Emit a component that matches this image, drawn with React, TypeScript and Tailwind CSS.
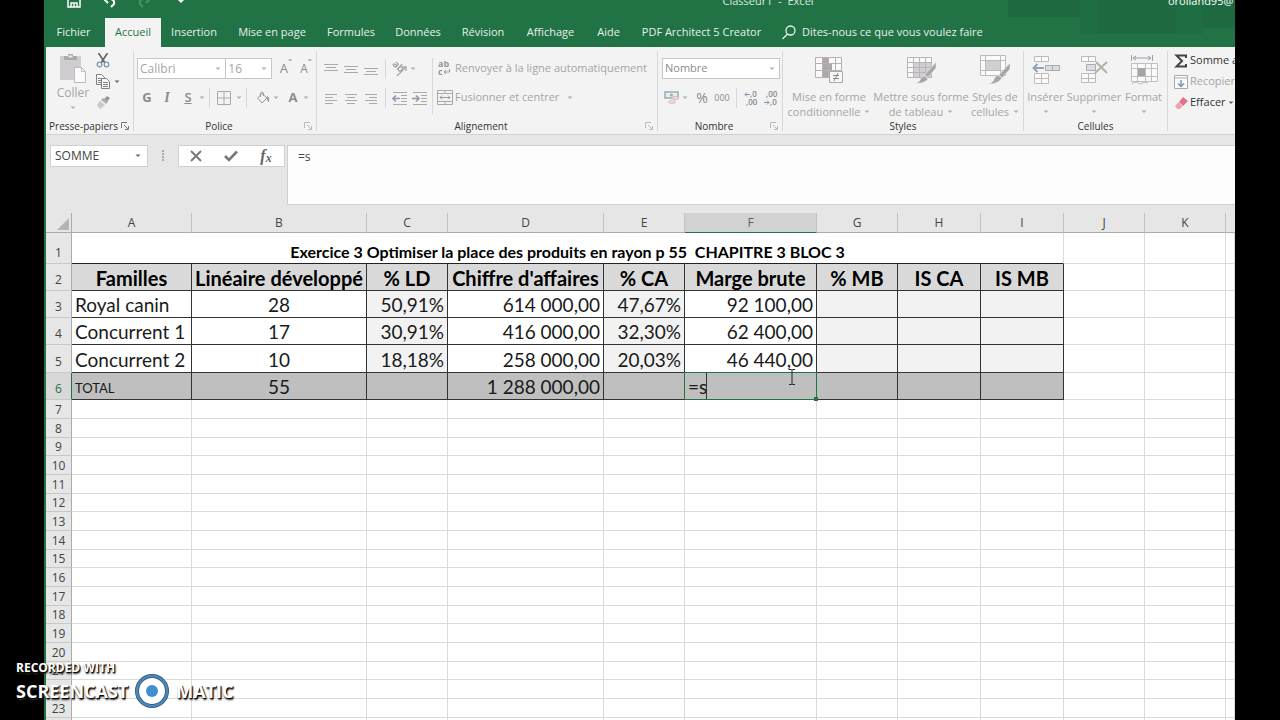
import { clsx } from "clsx";
import type { ReactNode } from "react";

const tabs = [
  { label: "Fichier", width: "w-[59px] pr-1" },
  { label: "Accueil", width: "w-[56px]", active: true },
  { label: "Insertion", width: "w-[66px]" },
  { label: "Mise en page", width: "w-[90px]" },
  { label: "Formules", width: "w-[68px]" },
  { label: "Données", width: "w-[66px]" },
  { label: "Révision", width: "w-[64px]" },
  { label: "Affichage", width: "w-[71px]" },
  { label: "Aide", width: "w-[45px]" },
  { label: "PDF Architect 5 Creator", width: "w-[141px]" },
];

const columns = [
  { name: "A", width: "w-[120px]" },
  { name: "B", width: "w-[175px]" },
  { name: "C", width: "w-[81px]" },
  { name: "D", width: "w-[156px]" },
  { name: "E", width: "w-[81px]" },
  { name: "F", width: "w-[132px]" },
  { name: "G", width: "w-[81px]" },
  { name: "H", width: "w-[83px]" },
  { name: "I", width: "w-[83px]" },
  { name: "J", width: "w-[81px]" },
  { name: "K", width: "w-[81px]" },
];

const headings = [
  "Familles",
  "Linéaire développé",
  "% LD",
  "Chiffre d'affaires",
  "% CA",
  "Marge brute",
  "% MB",
  "IS CA",
  "IS MB",
];

const families = [
  ["Royal canin", "28", "50,91%", "614 000,00", "47,67%", "92 100,00", "", "", ""],
  ["Concurrent 1", "17", "30,91%", "416 000,00", "32,30%", "62 400,00", "", "", ""],
  ["Concurrent 2", "10", "18,18%", "258 000,00", "20,03%", "46 440,00", "", "", ""],
];

const totals = ["TOTAL", "55", "", "1 288 000,00", "", "=s", "", "", ""];

const emptyRows = Array.from({ length: 18 }, (_, i) => i + 7);

function Caret({ dark = false }: { dark?: boolean }) {
  return (
    <svg viewBox="0 0 6 4" className={clsx("h-1 w-1.5 shrink-0", dark ? "fill-[#666]" : "fill-[#b0b0b0]")} aria-hidden="true">
      <path d="M.5 .5h5L3 3z" />
    </svg>
  );
}

function Divider({ className }: { className?: string }) {
  return <span className={clsx("w-px shrink-0 bg-[#d8d8d8]", className)} />;
}

function Tool({ label, className, children }: { label: string; className: string; children: ReactNode }) {
  return (
    <button type="button" aria-label={label} className={clsx("flex shrink-0 items-center justify-center", className)}>
      {children}
    </button>
  );
}

function Group({
  title,
  className,
  launcher = true,
  darkLauncher = false,
  children,
}: {
  title: string;
  className: string;
  launcher?: boolean;
  darkLauncher?: boolean;
  children: ReactNode;
}) {
  return (
    <section className={clsx("flex shrink-0", className)}>
      <div className="flex min-w-0 flex-1 flex-col">
        <div className="h-[71px] shrink-0 pt-1">{children}</div>
        <div className="flex h-4 items-center text-[10px] leading-4 text-[#333]">
          <span className="flex-1 text-center whitespace-nowrap">{title}</span>
          {launcher && (
            <button type="button" aria-label={`Options ${title}`} className="mr-1">
              <svg viewBox="0 0 8 8" className={clsx("size-2 fill-none", darkLauncher ? "stroke-[#777]" : "stroke-[#bbb]")}>
                <path d="M.5 6V.5H6M3 3l4 4M7.500 4v3.500H4" />
              </svg>
            </button>
          )}
        </div>
      </div>
      <Divider className="mt-1 h-20" />
    </section>
  );
}

function BigButton({ lines, className, children }: { lines: string[]; className: string; children: ReactNode }) {
  return (
    <button type="button" className={clsx("flex shrink-0 flex-col items-center text-[11px] leading-[15px] text-[#a5a5a5]", className)}>
      <span className="mb-1 flex h-[30px] items-center">{children}</span>
      <span className="whitespace-nowrap">{lines[0]}</span>
      <span className="flex h-[15px] items-center gap-1 whitespace-nowrap">
        {lines[1]}
        <Caret />
      </span>
    </button>
  );
}

function Lines({ rows }: { rows: [number, number, number][] }) {
  return (
    <svg viewBox="0 0 16 16" className="size-4 fill-none stroke-[#aaa]" shapeRendering="crispEdges">
      {rows.map(([x1, x2, y]) => (
        <path key={y} d={`M${x1} ${y}.5H${x2}`} />
      ))}
    </svg>
  );
}

function Indent({ right = false }: { right?: boolean }) {
  return (
    <svg viewBox="0 0 16 16" className="size-4 fill-none stroke-[#aaa]">
      <path d="M1 2.500h14M9 5.500h6M9 8.500h6M9 11.500h6M1 14.500h14" />
      <path d={right ? "M0 8.500h7M4 5.500l3 3-3 3" : "M8 8.500H1M4 5.500l-3 3 3 3"} className="stroke-[#8f9bab]" strokeWidth="1.6" />
    </svg>
  );
}

function PasteIcon() {
  return (
    <svg viewBox="0 0 28 30" className="h-[30px] w-7">
      <path d="M1 3h21v24H1z" fill="#cfcdcf" />
      <path d="M5 3h4V1h5v2h4v4H5z" fill="#a9a9a9" />
      <path d="M9.500 2.500h4v2h-4z" fill="#eee" />
      <path d="M15.500 14.500h7l4 4v11h-11z" fill="#fafafa" stroke="#bbb" />
      <path d="M22.500 14.500v4h4" fill="none" stroke="#bbb" />
    </svg>
  );
}

function Scissors() {
  return (
    <svg viewBox="0 0 14 15" className="h-[15px] w-3.5 fill-none">
      <path d="M2.500 0l6.500 10M11.500 0L5 10" stroke="#666" strokeWidth="1.700" />
      <circle cx="3.500" cy="11.500" r="2.300" stroke="#8296b5" strokeWidth="1.300" />
      <circle cx="10.500" cy="11.500" r="2.300" stroke="#8296b5" strokeWidth="1.300" />
    </svg>
  );
}

function CopyIcon() {
  return (
    <svg viewBox="0 0 14 15" className="h-[15px] w-3.5 fill-[#f8f8f8] stroke-[#808080]">
      <path d="M.5.5h5l3 3v7h-8z" />
      <path d="M2 4.500h4M2 6.500h4M2 8.500h3" />
      <path d="M5.500 4.500h5l3 3v7h-8z" />
      <path d="M7 8.500h5M7 10.500h5M7 12.500h5" />
    </svg>
  );
}

function BrushIcon() {
  return (
    <svg viewBox="0 0 14 14" className="size-3.5">
      <path d="M11 1l3 2-3 4-3-3z" fill="#999" />
      <path d="M7 3l5 4-2 2-5-4z" fill="#b0b0b0" />
      <path d="M4 6l5 4-5 4-3-4z" fill="#cdc8c4" />
    </svg>
  );
}

function BordersIcon() {
  return (
    <svg viewBox="0 0 14 14" className="size-3.5 fill-none stroke-[#aaa]">
      <path d="M.5.5h13v13H.5zM7 .5v13M.5 7h13" />
    </svg>
  );
}

function BucketIcon() {
  return (
    <svg viewBox="0 0 14 14" className="size-3.5 fill-none stroke-[#999]">
      <path d="M6 2.500l5 4.500-5 5-4.500-5zM4.500 6V2q1.500-2 3 0v3" />
      <path d="M11.500 5.500q2 2 1 5-1.500-1-1-5z" className="fill-[#999]" />
    </svg>
  );
}

function AngleTextIcon() {
  return (
    <svg viewBox="0 0 16 16" className="size-4">
      <text x="0" y="7" transform="rotate(42 4 5)" fontSize="10" fontWeight="600" fill="#999">
        ab
      </text>
      <path d="M5 15l9-9M10 6h4v4" fill="none" stroke="#aaa" strokeWidth="1.300" />
    </svg>
  );
}

function WrapIcon() {
  return (
    <svg viewBox="0 0 14 15" className="h-[15px] w-3.5" fill="#999">
      <text x="1" y="6" fontSize="9" fontWeight="700">
        ab
      </text>
      <text x="1" y="14" fontSize="9" fontWeight="700">
        c
      </text>
      <path d="M12.500 8v3H7M9 9l-2 2 2 2" fill="none" stroke="#8f9bab" />
    </svg>
  );
}

function MergeIcon() {
  return (
    <svg viewBox="0 0 16 15" className="h-[15px] w-4 fill-none stroke-[#aaa]">
      <path d="M.5.5h15v14H.5zM.5 3.500h15M.5 11.500h15M8 .5v3M8 11.500v3" />
      <path d="M3 7.500h10M5 5.500l-2 2 2 2M11 5.500l2 2-2 2" className="stroke-[#8f9bab]" />
    </svg>
  );
}

function CurrencyIcon() {
  return (
    <svg viewBox="0 0 17 15" className="h-[15px] w-[17px]">
      <path d="M1 2h13v6H1z" fill="#e8edf0" stroke="#9daab5" strokeWidth="1.500" />
      <circle cx="7.500" cy="5" r="1.500" fill="#9daab5" />
      <ellipse cx="11.500" cy="8" rx="3.500" ry="1.500" fill="#eadfdf" stroke="#c9bcbc" />
      <ellipse cx="8" cy="12" rx="3.500" ry="1.500" fill="#f0dada" stroke="#dfc4c4" />
    </svg>
  );
}

function DecimalIcon({ more = false }: { more?: boolean }) {
  return (
    <svg viewBox="0 0 14 16" className="h-4 w-3.5" fill="#888">
      <text x={more ? 6 : 2} y="7" fontSize="8" fontWeight="600">
        {more ? ",0" : ",00"}
      </text>
      <text x={more ? 2 : 6} y="15" fontSize="8" fontWeight="600">
        {more ? ",00" : ",0"}
      </text>
      <path d={more ? "M6 4.500H1M3 2.500l-2 2 2 2" : "M0 12.500h5M3 10.500l2 2-2 2"} fill="none" stroke="#8296b5" />
    </svg>
  );
}

function ConditionalIcon() {
  return (
    <svg viewBox="0 0 30 28" className="h-7 w-[30px]">
      <path d="M1.500 1.500h26v20h-26z" fill="#faf8f9" />
      <path d="M9 2h5v6H9zM9 8h9v7H9zM9 15h7v6H9z" fill="#aaa" />
      <path d="M1.500 1.500h26v20h-26zM1.500 7.500h26M1.500 14.500h26M8.500 1.500v20M14.500 1.500v20M21.500 1.500v20" fill="none" stroke="#b9b0b4" />
      <path d="M15.500 15.500h13v11h-13z" fill="#f7f7f7" stroke="#aaa" />
      <path d="M19 19.500h6M19 22.500h6M24 17l-4 8" stroke="#888" fill="none" />
    </svg>
  );
}

function TableStyleIcon() {
  return (
    <svg viewBox="0 0 30 28" className="h-7 w-[30px]">
      <path d="M1.500 1.500h24v20h-24z" fill="#fafafa" />
      <path d="M8 7h18v15H8z" fill="#d2cfd2" />
      <path d="M1.500 1.500h24v20h-24zM1.500 6.500h24M1.500 11.500h24M1.500 16.500h24M7.500 1.500v20M13.500 1.500v20M19.500 1.500v20" fill="none" stroke="#b9b4b9" />
      <path d="M30 6v6l-8 9-3-2z" fill="#a5a5a5" stroke="#f3f3f3" strokeWidth=".5" />
      <path d="M18 20l4 3q-4 5-12 4 4-1 5-5z" fill="#a5a5a5" stroke="#f3f3f3" strokeWidth=".5" />
    </svg>
  );
}

function CellStyleIcon() {
  return (
    <svg viewBox="0 0 30 30" className="h-[30px] w-[30px]">
      <path d="M.5.5h25v20H.5z" fill="#fafafa" />
      <path d="M6 6h15v10H6z" fill="#d0d0d0" />
      <path d="M.5.5h25v20H.5zM.5 5.500h25M.5 15.500h25M5.500.5v20M20.500.5v20" fill="none" stroke="#bbb" />
      <path d="M30 8v6l-8 9-3-3z" fill="#a5a5a5" stroke="#f3f3f3" strokeWidth=".5" />
      <path d="M18 20l4 3q-4 6-13 6 5-2 6-7z" fill="#a5a5a5" stroke="#f3f3f3" strokeWidth=".5" />
    </svg>
  );
}

function InsertIcon() {
  return (
    <svg viewBox="0 0 28 28" className="size-7 fill-[#fafafa]">
      <path d="M2.500.5h14v5h-14zM9.500.5v5" stroke="#bbb" />
      <path d="M13.500 9.500h14v5h-14zM20.500 9.500v5" stroke="#aaa" className="fill-[#d9dde2]" />
      <path d="M2.500 17.500h14v10h-14zM9.500 17.500v10M2.500 22.500h14" stroke="#c9b8bc" />
      <path d="M12 12H2M5.500 8L1.500 12l4 4" fill="none" stroke="#91a2b5" strokeWidth="2" />
    </svg>
  );
}

function DeleteIcon() {
  return (
    <svg viewBox="0 0 28 28" className="size-7 fill-[#fafafa]">
      <path d="M1.500.5h14v5h-14zM8.500.5v5" stroke="#bbb" />
      <path d="M6.500 8.500h9v6h-9z" stroke="#aaa" className="fill-[#d9dde2]" />
      <path d="M1.500 17.500h14v9h-14zM8.500 17.500v9M1.500 22.500h14" stroke="#bbb" />
      <path d="M16 6l11 11M27 6L15 17" fill="none" stroke="#b3b0a6" strokeWidth="2" />
    </svg>
  );
}

function FormatIcon() {
  return (
    <svg viewBox="0 0 28 30" className="h-[30px] w-7">
      <path d="M1.500 0v6M22.500 0v6M3 3h18M6 1L3 3l3 2M18 1l3 2-3 2" fill="none" stroke="#91a2b5" />
      <path d="M1.500 8.500h26v18h-26zM1.500 13.500h26M1.500 21.500h26M7.500 8.500v18M15.500 8.500v18M21.500 8.500v18" fill="#fafafa" stroke="#c2bdc0" />
      <path d="M8 13h7v8H8z" fill="#a5a5a5" />
      <path d="M2 29q4-4 8 0 5-3 8-1" fill="none" stroke="#bbb" />
    </svg>
  );
}

function Ribbon() {
  return (
    <div className="flex h-[88px] overflow-hidden border-b border-[#d2d2d2] bg-[#f3f3f3]">
      <Group title="Presse-papiers" className="w-[88px]" darkLauncher>
        <div className="flex pt-0.5">
          <button type="button" className="flex w-12 flex-col items-center pl-1.5 text-[12px] leading-[15px] text-[#a5a5a5]">
            <PasteIcon />
            <span className="mt-0.5">Coller</span>
            <span className="flex h-[15px] items-center">
              <Caret />
            </span>
          </button>
          <div className="flex flex-col gap-1.5">
            <Tool label="Couper" className="ml-0.5 w-3.5">
              <Scissors />
            </Tool>
            <Tool label="Copier" className="ml-0.5 gap-1">
              <CopyIcon />
              <Caret dark />
            </Tool>
            <Tool label="Reproduire la mise en forme" className="ml-0.5 w-3.5">
              <BrushIcon />
            </Tool>
          </div>
        </div>
      </Group>

      <Group title="Police" className="w-[183px]">
        <div className="flex h-full flex-col gap-2 pt-[7px] pl-[3px] text-[#8c8c8c]">
          <div className="flex h-[21px] items-center">
            <label className="flex h-[21px] w-[90px] items-center border border-[#c6c6c6] bg-white pr-1">
              <select aria-label="Police" className="min-w-0 flex-1 appearance-none pl-0.5 text-[12px] text-[#a5a5a5] outline-none">
                <option>Calibri</option>
              </select>
              <Caret />
            </label>
            <label className="-ml-px flex h-[21px] w-[47px] items-center border border-[#c6c6c6] bg-white pr-1">
              <select aria-label="Taille" className="min-w-0 flex-1 appearance-none pl-0.5 text-[12px] text-[#a5a5a5] outline-none">
                <option>16</option>
              </select>
              <Caret />
            </label>
            <Tool label="Augmenter la taille" className="ml-1 w-5 text-[13px]">
              A<span className="mb-2 text-[10px]">ˆ</span>
            </Tool>
            <Tool label="Réduire la taille" className="w-5 text-[12px]">
              A<span className="mb-2 text-[10px]">ˇ</span>
            </Tool>
          </div>
          <div className="flex h-[21px] items-center text-[13px]">
            <Tool label="Gras" className="w-5 font-bold">G</Tool>
            <Tool label="Italique" className="w-5 font-['Liberation_Serif',serif] text-[14px] font-bold italic">I</Tool>
            <Tool label="Souligné" className="w-[22px] font-semibold underline">S</Tool>
            <Caret />
            <Divider className="mx-1 h-5" />
            <Tool label="Bordures" className="w-5"><BordersIcon /></Tool>
            <span className="w-0.5" />
            <Caret />
            <Divider className="mr-1.5 ml-1 h-5" />
            <Tool label="Remplissage" className="w-5"><BucketIcon /></Tool>
            <Caret />
            <Tool label="Couleur de police" className="ml-1 w-5 font-bold">A</Tool>
            <Caret />
          </div>
        </div>
      </Group>

      <Group title="Alignement" className="w-[341px]">
        <div className="flex h-full pt-[7px] pl-1">
          <div className="flex flex-col gap-2">
            <div className="flex h-[21px] items-center">
              <Tool label="Haut" className="w-5"><Lines rows={[[1, 15, 3], [3, 13, 6], [1, 15, 9]]} /></Tool>
              <Tool label="Milieu" className="w-5"><Lines rows={[[1, 15, 5], [3, 13, 8], [1, 15, 11]]} /></Tool>
              <Tool label="Bas" className="w-5"><Lines rows={[[1, 15, 7], [3, 13, 10], [1, 15, 13]]} /></Tool>
              <Divider className="mx-1 h-5" />
              <Tool label="Orientation" className="w-5"><AngleTextIcon /></Tool>
              <Caret />
            </div>
            <div className="flex h-[21px] items-center">
              <Tool label="Gauche" className="w-5"><Lines rows={[[2, 14, 4], [2, 10, 7], [2, 14, 10], [2, 10, 13]]} /></Tool>
              <Tool label="Centre" className="w-5"><Lines rows={[[2, 14, 4], [4, 12, 7], [2, 14, 10], [4, 12, 13]]} /></Tool>
              <Tool label="Droite" className="w-5"><Lines rows={[[2, 14, 4], [6, 14, 7], [2, 14, 10], [6, 14, 13]]} /></Tool>
              <Divider className="mx-1 h-5" />
              <Tool label="Diminuer le retrait" className="w-5"><Indent /></Tool>
              <Tool label="Augmenter le retrait" className="w-5"><Indent right /></Tool>
            </div>
          </div>
          <Divider className="mr-1 ml-0.5 h-14" />
          <div className="flex flex-col gap-2 text-[11px] text-[#a5a5a5]">
            <button type="button" className="flex h-[21px] items-center gap-1 whitespace-nowrap">
              <WrapIcon />
              Renvoyer à la ligne automatiquement
            </button>
            <button type="button" className="flex h-[21px] items-center gap-0.5 whitespace-nowrap">
              <MergeIcon />
              Fusionner et centrer
              <span className="w-1" />
              <Caret />
            </button>
          </div>
        </div>
      </Group>

      <Group title="Nombre" className="w-[125px]">
        <div className="flex h-full flex-col gap-2 pt-[7px] pl-1 text-[#8c8c8c]">
          <label className="flex h-[21px] w-[118px] items-center border border-[#c6c6c6] bg-white pr-1">
            <select aria-label="Format de nombre" className="min-w-0 flex-1 appearance-none pl-0.5 text-[11px] text-[#8c8c8c] outline-none">
              <option>Nombre</option>
            </select>
            <Caret />
          </label>
          <div className="flex h-[21px] items-center">
            <Tool label="Format comptable" className="w-5"><CurrencyIcon /></Tool>
            <Caret />
            <Tool label="Pourcentage" className="ml-1 w-5 text-[14px]">%</Tool>
            <Tool label="Milliers" className="w-5 text-[9px]">000</Tool>
            <Divider className="mx-1 h-5" />
            <Tool label="Ajouter une décimale" className="w-5"><DecimalIcon more /></Tool>
            <Tool label="Réduire les décimales" className="w-5"><DecimalIcon /></Tool>
          </div>
        </div>
      </Group>

      <Group title="Styles" className="w-[241px]" launcher={false}>
        <div className="flex pt-1">
          <BigButton lines={["Mise en forme", "conditionnelle"]} className="w-[92px]"><ConditionalIcon /></BigButton>
          <BigButton lines={["Mettre sous forme", "de tableau"]} className="w-[92px]"><TableStyleIcon /></BigButton>
          <BigButton lines={["Styles de", "cellules"]} className="w-[56px]"><CellStyleIcon /></BigButton>
        </div>
      </Group>

      <Group title="Cellules" className="w-[144px]" launcher={false}>
        <div className="flex pt-1">
          <BigButton lines={["Insérer"]} className="w-[43px]"><InsertIcon /></BigButton>
          <BigButton lines={["Supprimer"]} className="w-[54px]"><DeleteIcon /></BigButton>
          <BigButton lines={["Format"]} className="w-[45px]"><FormatIcon /></BigButton>
        </div>
      </Group>

      <div className="flex min-w-0 flex-1 flex-col overflow-hidden pt-[3px] pl-1.5 text-[11px] text-[#333]">
        <button type="button" className="flex h-[21px] items-center gap-0.5 whitespace-nowrap">
          <svg viewBox="0 0 14 14" className="size-3.5 shrink-0 fill-none stroke-[#444]" strokeWidth="2">
            <path d="M12 4V1.500H2.500L8 7l-5.500 5.500H12V10" />
          </svg>
          Somme automatique
        </button>
        <button type="button" className="flex h-[21px] items-center gap-0.5 whitespace-nowrap text-[#a5a5a5]">
          <svg viewBox="0 0 14 14" className="size-3.5 shrink-0 fill-[#fafafa] stroke-[#aaa]">
            <path d="M.5.5h13v13H.5zM.5 3h13" />
            <path d="M7 5v6M4 8.500l3 3 3-3" fill="none" stroke="#7f95ae" strokeWidth="1.500" />
          </svg>
          Recopier
        </button>
        <button type="button" className="flex h-[21px] items-center gap-0.5 whitespace-nowrap">
          <svg viewBox="0 0 14 14" className="size-3.5 shrink-0">
            <path d="M9 1l5 4-5 5-4-4z" fill="#e0708c" />
            <path d="M4.500 6l4 4.500L6 13H3l-2-3z" fill="#eda3b3" />
          </svg>
          Effacer
          <Caret dark />
        </button>
      </div>
    </div>
  );
}

function TitleBar() {
  return (
    <header className="relative bg-[#217346] text-white">
      <svg viewBox="0 0 235 36" className="absolute top-0 right-0 h-9 w-[235px]" aria-hidden="true">
        <path d="M8 0h72v17H8zM98 0h78v34H98zM203 0h32v28h-32z" fill="#1e693f" />
        <path d="M80 0h18v34H80zM176 0h27v34h-27z" fill="#1f6e43" />
      </svg>
      <div className="relative -mt-4 flex h-[34px] items-center text-[11px]">
        <div className="flex flex-[14] items-center gap-4 pl-[21px]">
          <Tool label="Enregistrer" className="w-3.5">
            <svg viewBox="0 0 14 14" className="size-3.5 fill-none stroke-white" strokeWidth="1.500">
              <path d="M1 1h12v12H1zM4 1v4h6V1M4 13V9h6v4M7 10v3" />
            </svg>
          </Tool>
          <Tool label="Annuler" className="ml-1 w-4">
            <svg viewBox="0 0 16 14" className="h-3.5 w-4 fill-none stroke-white" strokeWidth="2">
              <path d="M3 5h7q4 1 3 5l-3 3M7 1L3 5l4 4" />
            </svg>
          </Tool>
          <Tool label="Rétablir" className="ml-1 w-4">
            <svg viewBox="0 0 16 14" className="h-3.5 w-4 fill-none stroke-[#4d9069]" strokeWidth="2">
              <path d="M13 5H6Q2 6 3 10l3 3M9 1l4 4-4 4" />
            </svg>
          </Tool>
          <span className="ml-2 h-0 w-0 border-x-4 border-t-4 border-x-transparent border-t-white" />
        </div>
        <span className="text-[#d9e8df]">Classeur1&nbsp; -&nbsp; Excel</span>
        <div className="flex flex-[9] justify-end">
          <span className="w-[67px] overflow-hidden">orolland95@</span>
        </div>
      </div>
      <nav className="relative flex h-[29px] items-stretch text-[11px] text-[#e6f0ea]">
        {tabs.map((tab) => (
          <button
            key={tab.label}
            type="button"
            className={clsx(
              "shrink-0 whitespace-nowrap",
              tab.width,
              tab.active && "bg-[#f3f3f3] text-[#217346]",
            )}
          >
            {tab.label}
          </button>
        ))}
        <button type="button" className="ml-2.5 flex items-center gap-1.5 whitespace-nowrap">
          <svg viewBox="0 0 14 15" className="h-[15px] w-3.5 fill-none stroke-[#e6f0ea]" strokeWidth="1.300">
            <circle cx="8.500" cy="5.500" r="4.500" />
            <path d="M5.500 9L.5 14" />
          </svg>
          Dites-nous ce que vous voulez faire
        </button>
      </nav>
    </header>
  );
}

function FormulaBar() {
  return (
    <div className="flex items-start bg-[#e6e6e6] pt-2.5 pb-2 pl-1 text-[12px] text-[#444]">
      <label className="flex h-[22px] w-[98px] items-center border border-[#d0d0d0] bg-white pr-1.5">
        <input aria-label="Zone Nom" defaultValue="SOMME" className="min-w-0 flex-1 pl-1 text-[12px] outline-none" />
        <Caret dark />
      </label>
      <svg viewBox="0 0 2 12" className="mx-3.5 mt-[5px] h-3 w-0.5 fill-[#aaa]" aria-hidden="true">
        <path d="M0 0h2v2H0zM0 3h2v2H0zM0 6h2v2H0zM0 9h2v2H0z" />
      </svg>
      <div className="flex h-[22px] w-[107px] items-center border border-[#d0d0d0] bg-white">
        <Tool label="Annuler la saisie" className="w-[34px]">
          <svg viewBox="0 0 12 12" className="size-3 fill-none stroke-[#777]" strokeWidth="1.900">
            <path d="M1 1l10 10M11 1L1 11" />
          </svg>
        </Tool>
        <Tool label="Valider" className="w-[36px]">
          <svg viewBox="0 0 14 12" className="h-3 w-3.5 fill-none stroke-[#777]" strokeWidth="2.600">
            <path d="M1 6l4 4 8-8.500" />
          </svg>
        </Tool>
        <Tool label="Insérer une fonction" className="w-[34px] font-['Liberation_Serif',serif] text-[16px] font-bold text-[#666] italic">
          f<span className="mt-1 text-[12px]">x</span>
        </Tool>
      </div>
      <div className="ml-0.5 h-[60px] flex-1 border-y border-l border-[#d0d0d0] bg-[#fdfdfd]">
        <input aria-label="Barre de formule" defaultValue="=s" className="h-5 w-full bg-transparent pl-2.5 text-[12px] outline-none" />
      </div>
    </div>
  );
}

function RowHead({ n, active = false }: { n: number; active?: boolean }) {
  return (
    <th
      scope="row"
      className={clsx(
        "border-r border-b border-b-[#c8c8c8] text-center align-bottom font-['Open_Sans',sans-serif] text-[12px] leading-5 font-normal",
        active ? "border-r-[#217346] bg-[#d8d8d8] text-[#217346]" : "border-r-[#ababab] bg-[#e6e6e6] text-[#444]",
      )}
    >
      {n}
    </th>
  );
}

function BlankCells({ count }: { count: number }) {
  return Array.from({ length: count }, (_, i) => <td key={i} className="border-r border-b border-[#dadada]" />);
}

function alignment(col: number) {
  if (col === 0) return "pl-[3px] text-left";
  return col === 1 ? "text-center" : "pr-[3px] text-right";
}

function Sheet() {
  return (
    <div className="min-h-0 flex-1 overflow-hidden bg-white">
      <table className="w-full table-fixed border-separate border-spacing-0">
        <colgroup>
          <col className="w-[26px]" />
          {columns.map((c) => (
            <col key={c.name} className={c.width} />
          ))}
          <col />
        </colgroup>
        <thead>
          <tr className="h-5 bg-[#e6e6e6] text-[12px] leading-[18px] text-[#444]">
            <th className="border-r border-b border-[#ababab] align-bottom">
              <svg viewBox="0 0 12 12" className="ml-auto mr-0.5 mb-0.5 size-3 fill-[#b5b5b5]" aria-hidden="true">
                <path d="M12 0v12H0z" />
              </svg>
            </th>
            {columns.map((c) => (
              <th
                key={c.name}
                scope="col"
                className={clsx(
                  "border-r border-b border-r-[#c3c3c3] font-normal",
                  c.name === "F" ? "border-b-[#217346] bg-[#d2d2d2] text-[#4c6b5a]" : "border-b-[#ababab]",
                )}
              >
                {c.name}
              </th>
            ))}
            <th className="border-b border-[#ababab]" />
          </tr>
        </thead>
        <tbody className="font-[Lato,sans-serif] text-[19px] leading-6 text-[#1a1a1a]">
          <tr className="h-[31px]">
            <RowHead n={1} />
            <td colSpan={9} className="border-r border-b border-r-[#dadada] border-b-[#222] text-center align-bottom text-[16px] leading-[22px] font-bold text-black">
              Exercice 3 Optimiser la place des produits en rayon p 55&nbsp; CHAPITRE 3 BLOC 3
            </td>
            <BlankCells count={3} />
          </tr>
          <tr className="h-[27px]">
            <RowHead n={2} />
            {headings.map((h) => (
              <td key={h} className="border-r border-b border-[#333] bg-[#d9d9d9] text-center align-bottom text-[20px] font-bold whitespace-nowrap text-black">
                {h}
              </td>
            ))}
            <BlankCells count={3} />
          </tr>
          {families.map((row, r) => (
            <tr key={row[0]} className={r === 2 ? "h-7" : "h-[27px]"}>
              <RowHead n={r + 3} />
              {row.map((value, c) => (
                <td
                  key={c}
                  className={clsx(
                    "border-r border-b border-[#333] align-bottom whitespace-nowrap",
                    alignment(c),
                    [2, 4, 6, 7, 8].includes(c) && "bg-[#f2f2f2]",
                  )}
                >
                  {value}
                </td>
              ))}
              <BlankCells count={3} />
            </tr>
          ))}
          <tr className="h-[27px]">
            <RowHead n={6} active />
            {totals.map((value, c) =>
              c === 5 ? (
                <td key={c} className="relative border-r border-b border-[#333] bg-[#bfbfbf]">
                  <div className="absolute -inset-px border border-[#217346]">
                    <input
                      aria-label="F6"
                      defaultValue={value}
                      className="block h-[26px] w-[22px] border-r border-[#333] pt-px pl-[3px] outline-none"
                    />
                    <span className="absolute -right-0.5 -bottom-0.5 size-1 bg-[#217346]" />
                    <svg viewBox="0 0 8 16" className="absolute -top-1 right-5 h-4 w-2 fill-none stroke-[#222]" aria-hidden="true">
                      <path d="M1 .5h2.500l.5.5.5-.5H7M4 1v14M1 15.500h2.500L4 15l.5.5H7" />
                    </svg>
                  </div>
                </td>
              ) : (
                <td
                  key={c}
                  className={clsx(
                    "border-r border-b border-[#333] bg-[#bfbfbf] align-bottom whitespace-nowrap",
                    alignment(c),
                    c === 0 && "text-[13px] leading-[22px]",
                  )}
                >
                  {value}
                </td>
              ),
            )}
            <BlankCells count={3} />
          </tr>
          {emptyRows.map((n, i) => (
            <tr key={n} className={i % 3 === 2 ? "h-[18px]" : "h-[19px]"}>
              <th
                scope="row"
                className="border-r border-b border-r-[#ababab] border-b-[#c8c8c8] bg-[#e6e6e6] font-['Open_Sans',sans-serif] text-[12px] leading-[17px] font-normal text-[#444]"
              >
                {n}
              </th>
              <BlankCells count={12} />
            </tr>
          ))}
        </tbody>
      </table>
    </div>
  );
}

function Watermark() {
  return (
    <div className="absolute bottom-3 left-4 font-bold text-white [text-shadow:1px_1px_1px_#000,1px_2px_2px_#333]">
      <div className="text-[12px] leading-3">RECORDED WITH</div>
      <div className="flex h-[34px] items-center gap-1.5 text-[18px]">
        <span>SCREENCAST</span>
        <svg viewBox="0 0 36 36" className="size-9" aria-hidden="true">
          <circle cx="18" cy="18" r="15" fill="#fff" stroke="#2d5678" strokeWidth="4" />
          <circle cx="18" cy="18" r="15" fill="none" stroke="#4c87b8" strokeWidth="2.500" />
          <circle cx="18" cy="18" r="6" fill="#3f8fd0" />
        </svg>
        <span>MATIC</span>
      </div>
    </div>
  );
}

export default function App() {
  return (
    <div className="relative h-screen overflow-hidden bg-black pr-[45px] pl-11 font-['Open_Sans',sans-serif]">
      <main className="flex h-full flex-col overflow-hidden border-l-2 border-[#217346] bg-[#e6e6e6]">
        <TitleBar />
        <Ribbon />
        <FormulaBar />
        <Sheet />
      </main>
      <Watermark />
    </div>
  );
}
